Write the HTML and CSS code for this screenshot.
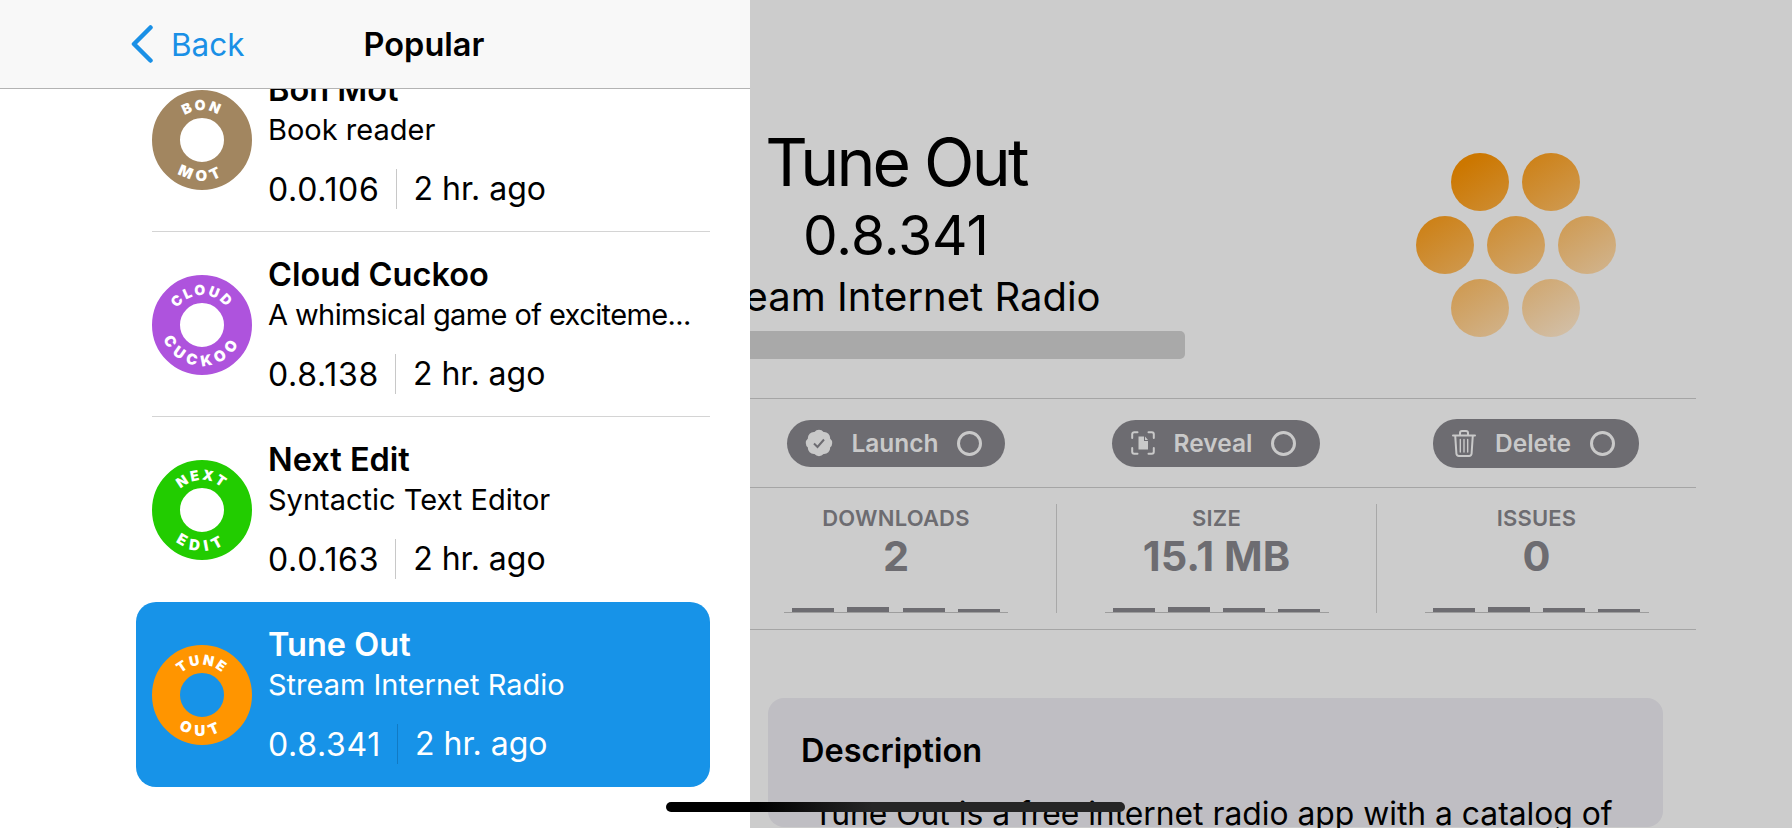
FILE: index.html
```html
<!DOCTYPE html>
<html lang="en">
<head>
  <meta charset="UTF-8" />
  <meta name="viewport" content="width=device-width, initial-scale=1.0" />
  <title>Popular</title>
  <link rel="stylesheet" href="styles.css">
</head>
<body>
  <!-- arcs shared by the app icons -->
  <svg class="defs" width="0" height="0">
    <defs>
      <path id="arcTop" d="M20 50 A30 30 0 0 1 80 50" />
      <path id="arcBottom" d="M9 50 A41 41 0 0 0 91 50" />
    </defs>
  </svg>

  <div class="app">
    <aside class="sidebar">
      <header class="navbar">
        <svg class="chevron" width="22" height="38" viewBox="0 0 22 38">
          <path d="M19.5 2.5 L3 19 L19.5 35.5" />
        </svg>
        <span class="back">Back</span>
        <span class="nav-title">Popular</span>
      </header>

      <div class="list">
        <div class="row">
          <svg class="icon" viewBox="0 0 100 100">
            <circle class="ring" cx="50" cy="50" r="36" stroke="#a28660" />
            <text><textPath href="#arcTop" startOffset="50%">BON</textPath></text>
            <text class="low"><textPath href="#arcBottom" startOffset="50%">MOT</textPath></text>
          </svg>
          <div class="info">
            <div class="name">Bon Mot</div>
            <div class="desc">Book reader</div>
            <div class="meta"><span class="ver">0.0.106</span><span class="when">2 hr. ago</span></div>
          </div>
        </div>

        <div class="row">
          <svg class="icon" viewBox="0 0 100 100">
            <circle class="ring" cx="50" cy="50" r="36" stroke="#ae53dd" />
            <text><textPath href="#arcTop" startOffset="50%">CLOUD</textPath></text>
            <text class="low"><textPath href="#arcBottom" startOffset="50%">CUCKOO</textPath></text>
          </svg>
          <div class="info">
            <div class="name">Cloud Cuckoo</div>
            <div class="desc tight">A whimsical game of exciteme...</div>
            <div class="meta"><span class="ver">0.8.138</span><span class="when">2 hr. ago</span></div>
          </div>
        </div>

        <div class="row no-line">
          <svg class="icon" viewBox="0 0 100 100">
            <circle class="ring" cx="50" cy="50" r="36" stroke="#22cc00" />
            <text><textPath href="#arcTop" startOffset="50%">NEXT</textPath></text>
            <text class="low"><textPath href="#arcBottom" startOffset="50%">EDIT</textPath></text>
          </svg>
          <div class="info">
            <div class="name">Next Edit</div>
            <div class="desc">Syntactic Text Editor</div>
            <div class="meta"><span class="ver">0.0.163</span><span class="when">2 hr. ago</span></div>
          </div>
        </div>

        <div class="row selected no-line">
          <svg class="icon" viewBox="0 0 100 100">
            <circle class="ring" cx="50" cy="50" r="36" stroke="#ff9500" />
            <text><textPath href="#arcTop" startOffset="50%">TUNE</textPath></text>
            <text class="low"><textPath href="#arcBottom" startOffset="50%">OUT</textPath></text>
          </svg>
          <div class="info">
            <div class="name">Tune Out</div>
            <div class="desc">Stream Internet Radio</div>
            <div class="meta"><span class="ver">0.8.341</span><span class="when">2 hr. ago</span></div>
          </div>
        </div>
      </div>
    </aside>

    <main class="detail">
      <div class="detail-inner">
        <section class="hero">
          <div class="hero-text">
            <h1>Tune Out</h1>
            <div class="version">0.8.341</div>
            <div class="tagline">Stream Internet Radio</div>
            <div class="hero-bar"></div>
          </div>
          <svg class="dots" width="200" height="190" viewBox="0 0 200 190">
            <defs>
              <linearGradient id="dotFade" gradientUnits="userSpaceOnUse" x1="50" y1="10" x2="160" y2="185">
                <stop offset="0" stop-color="#cc7700" />
                <stop offset="1" stop-color="#d2c1ac" />
              </linearGradient>
            </defs>
            <g fill="url(#dotFade)">
              <circle cx="64" cy="29" r="29" />
              <circle cx="135" cy="29" r="29" />
              <circle cx="29" cy="92" r="29" />
              <circle cx="100" cy="92" r="29" />
              <circle cx="171" cy="92" r="29" />
              <circle cx="64" cy="155" r="29" />
              <circle cx="135" cy="155" r="29" />
            </g>
          </svg>
        </section>

        <section class="actions">
          <div class="action-cell">
            <button class="pill">
              <svg width="28" height="28" viewBox="0 0 28 28">
                <path class="solid" d="M18.59 2.91 A6 6 0 0 1 25.09 9.41 A6 6 0 0 1 25.09 18.59 A6 6 0 0 1 18.59 25.09 A6 6 0 0 1 9.41 25.09 A6 6 0 0 1 2.91 18.59 A6 6 0 0 1 2.91 9.41 A6 6 0 0 1 9.41 2.91 A6 6 0 0 1 18.59 2.91 Z" />
                <path class="cut" d="M9 14.5 L12.5 18 L19 10.5" />
              </svg>
              <span>Launch</span>
              <i class="radio"></i>
            </button>
          </div>
          <div class="action-cell">
            <button class="pill pill-wide">
              <svg width="24" height="24" viewBox="0 0 24 24">
                <path class="line" d="M1.2 7 V3.2 A2 2 0 0 1 3.2 1.2 H6.5 M17.5 1.2 H20.8 A2 2 0 0 1 22.8 3.2 V7 M22.8 17 V20.8 A2 2 0 0 1 20.8 22.8 H17.5 M6.5 22.8 H3.2 A2 2 0 0 1 1.2 20.8 V17" />
                <path class="solid" d="M7.5 5.5 H13 V10 H17 V18.5 H7.5 Z M14 5.5 L17 9 H14 Z" />
              </svg>
              <span>Reveal</span>
              <i class="radio"></i>
            </button>
          </div>
          <div class="action-cell">
            <button class="pill pill-wide pill-tall">
              <svg width="24" height="27" viewBox="0 0 24 27">
                <path class="line" d="M1 5.5 H23 M8 5.5 V3 A2 2 0 0 1 10 1 H14 A2 2 0 0 1 16 3 V5.5 M3.2 5.5 L4.4 23.5 A2.5 2.5 0 0 0 6.9 26 H17.1 A2.5 2.5 0 0 0 19.6 23.5 L20.8 5.5" />
                <path class="line thin" d="M8.3 9.5 V22 M12 9.5 V22 M15.7 9.5 V22" />
              </svg>
              <span>Delete</span>
              <i class="radio"></i>
            </button>
          </div>
        </section>

        <section class="stats">
          <div class="stat">
            <div class="stat-label">DOWNLOADS</div>
            <div class="stat-value">2</div>
            <div class="spark"><b></b><b></b><b></b><b></b></div>
          </div>
          <div class="stat">
            <div class="stat-label">SIZE</div>
            <div class="stat-value">15.1 MB</div>
            <div class="spark"><b></b><b></b><b></b><b></b></div>
          </div>
          <div class="stat">
            <div class="stat-label">ISSUES</div>
            <div class="stat-value">0</div>
            <div class="spark"><b></b><b></b><b></b><b></b></div>
          </div>
        </section>

        <section class="card">
          <h2>Description</h2>
          <p>Tune Out is a free internet radio app with a catalog of</p>
        </section>
      </div>
    </main>
  </div>

  <div class="home-bar"></div>
</body>
</html>
```

FILE: styles.css
```css
html, body {
  margin: 0;
  height: 828px;
  overflow: hidden;
}

body {
  font-family: Inter, "Noto Sans", sans-serif;
  background: #cccccc;
  color: #000;
}

.defs {
  position: absolute;
}

.app {
  display: flex;
  height: 828px;
}

/* left list */
.sidebar {
  width: 750px;
  flex: none;
  background: #fff;
  overflow: hidden;
}

.navbar {
  position: relative;
  z-index: 2;
  height: 88px;
  display: flex;
  align-items: center;
  padding-left: 131px;
  background: #f8f8f8;
  border-bottom: 1px solid #b3b3b3;
}

.chevron {
  flex: none;
}

.chevron path {
  fill: none;
  stroke: #1a90e6;
  stroke-width: 4.5;
  stroke-linecap: round;
  stroke-linejoin: round;
}

.back {
  margin-left: 18px;
  font-size: 31.5px;
  color: #1a90e6;
}

.nav-title {
  margin-left: 119px;
  font-size: 32.5px;
  font-weight: 600;
}

.list {
  margin-top: -42px;
  width: 574px;
  margin-left: 136px;
}

.row {
  position: relative;
  height: 185px;
  box-sizing: border-box;
  padding-left: 16px;
  display: flex;
  align-items: center;
  gap: 16px;
  border-radius: 20px;
}

.row::after {
  content: "";
  position: absolute;
  left: 16px;
  right: 0;
  bottom: 0;
  height: 1px;
  background: #d4d4d4;
}

.row.no-line::after {
  display: none;
}

.row.selected {
  background: #1793e8;
  color: #fff;
}

.icon {
  width: 100px;
  height: 100px;
  flex: none;
  margin-top: 1px;
}

.ring {
  fill: none;
  stroke-width: 28;
}

.icon text {
  font-size: 14px;
  font-weight: 900;
  letter-spacing: 2px;
  fill: #fff;
  text-anchor: middle;
}

.icon text.low {
  font-size: 15px;
  letter-spacing: 5.5px;
}

.info {
  align-self: flex-start;
  padding-top: 24px;
  min-width: 0;
}

.name {
  font-size: 32.5px;
  font-weight: 600;
  line-height: 38px;
}

.desc {
  font-size: 29px;
  line-height: 41px;
  white-space: nowrap;
}

.desc.tight {
  letter-spacing: -.6px;
}

.meta {
  display: flex;
  align-items: center;
  margin-top: 19px;
  height: 40px;
  font-size: 32px;
}

.ver {
  letter-spacing: .7px;
}

.when {
  margin-left: 16px;
  padding-left: 17px;
  border-left: 1px solid #c8c8c8;
  line-height: 40px;
}

.selected .when {
  border-left-color: #117ac4;
}

/* right pane, dimmed behind the list */
.detail {
  flex: 1;
  overflow: hidden;
}

.detail-inner {
  width: 960px;
  margin-left: -14px;
}

.hero {
  height: 398px;
  box-sizing: border-box;
  padding-top: 122px;
  display: flex;
  align-items: flex-start;
}

.hero-text {
  width: 320px;
  flex: none;
  display: flex;
  flex-direction: column;
  align-items: center;
  white-space: nowrap;
}

h1 {
  margin: 0;
  font-size: 66px;
  font-weight: 400;
  letter-spacing: -2.8px;
  line-height: 80px;
}

.version {
  margin-top: 1px;
  font-size: 55px;
  line-height: 64px;
}

.tagline {
  margin-top: 6px;
  font-size: 40px;
  line-height: 48px;
}

.hero-bar {
  flex: none;
  width: 578px;
  height: 28px;
  margin-top: 10px;
  background: #a9a9a9;
  border-radius: 5px;
}

.dots {
  flex: none;
  margin: 31px 0 0 360px;
}

.actions,
.stats {
  display: grid;
  grid-template-columns: repeat(3, 320px);
  border-top: 1px solid #a5a5a5;
}

.actions {
  height: 88px;
}

.action-cell {
  display: flex;
  align-items: center;
  justify-content: center;
}

.pill {
  display: flex;
  align-items: center;
  gap: 18px;
  height: 47px;
  padding: 0 23px 0 18px;
  border: 0;
  border-radius: 24px;
  background: #6d6c71;
  color: #c9c9c9;
  font-family: inherit;
  font-size: 24.5px;
  font-weight: 600;
}

.pill-wide {
  gap: 19px;
  padding: 0 24px 0 19px;
}

.pill-tall {
  height: 49px;
}

.pill svg {
  flex: none;
}

.solid {
  fill: #c9c9c9;
}

.cut {
  fill: none;
  stroke: #6d6c71;
  stroke-width: 2;
}

.line {
  fill: none;
  stroke: #c9c9c9;
  stroke-width: 2;
  stroke-linecap: round;
}

.line.thin {
  stroke-width: 1.4;
}

.radio {
  width: 25px;
  height: 25px;
  box-sizing: border-box;
  border: 3px solid #c9c9c9;
  border-radius: 50%;
}

.stats {
  height: 143px;
  box-sizing: border-box;
  padding: 16px 0 16px;
  border-bottom: 1px solid #a5a5a5;
}

.stat {
  display: flex;
  flex-direction: column;
  align-items: center;
  color: #6d6c71;
}

.stat + .stat {
  border-left: 1px solid #a8a8a8;
}

.stat-label {
  margin-top: 2px;
  font-size: 22px;
  font-weight: 600;
  letter-spacing: .2px;
  line-height: 24px;
}

.stat-value {
  margin-top: 3px;
  font-size: 41.5px;
  font-weight: 700;
  line-height: 46px;
}

.spark {
  margin-top: auto;
  width: 224px;
  box-sizing: border-box;
  padding: 0 8px;
  display: flex;
  align-items: flex-end;
  justify-content: space-between;
  border-bottom: 1px solid #9d9d9d;
}

.spark b {
  width: 42px;
  height: 4px;
  background: #6d6c71;
}

.spark b:nth-child(2) {
  height: 5px;
}

.spark b:nth-child(4) {
  height: 3px;
}

.card {
  margin: 68px 0 0 32px;
  width: 895px;
  height: 129px;
  box-sizing: border-box;
  padding: 33px 33px 0;
  background: #bfbec3;
  border-radius: 16px;
}

h2 {
  margin: 0;
  font-size: 32.5px;
  font-weight: 600;
  line-height: 40px;
}

.card p {
  margin: 25px 0 0 12px;
  font-size: 31.8px;
  line-height: 36px;
  white-space: nowrap;
}

.home-bar {
  position: absolute;
  left: 666px;
  top: 802px;
  width: 459px;
  height: 10px;
  border-radius: 5px;
  background: linear-gradient(to right, #000 20%, #262626 45%);
}
```
